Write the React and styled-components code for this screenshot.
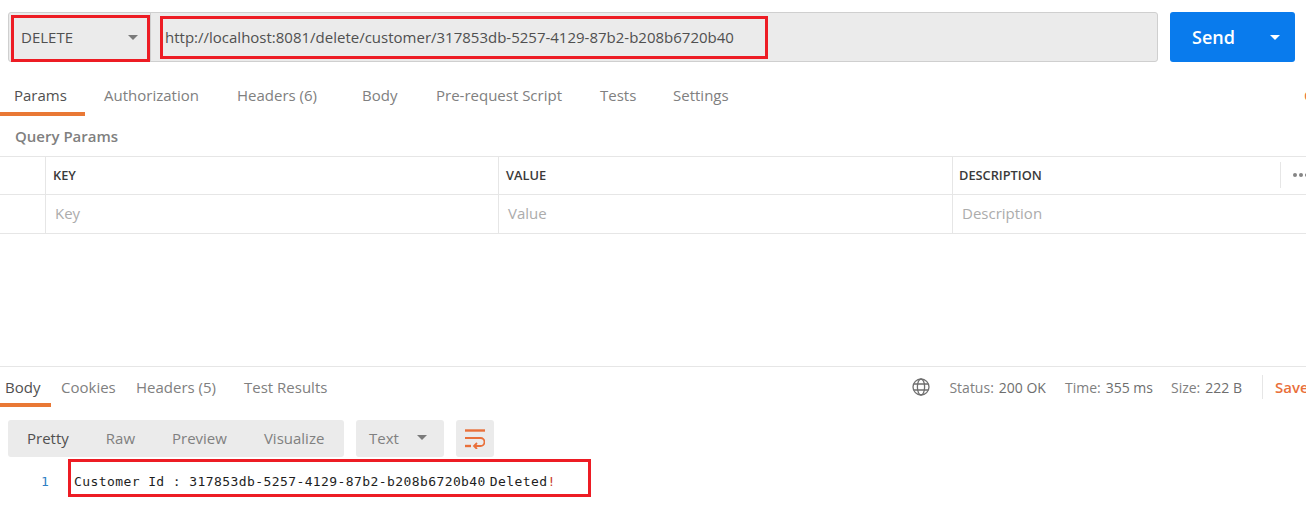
import React from 'react';
import styled, { createGlobalStyle } from 'styled-components';

const GlobalStyle = createGlobalStyle`
  html, body {
    margin: 0;
    padding: 0;
    background: #fff;
    overflow: hidden;
  }
  body {
    font-family: "Open Sans", "Liberation Sans", sans-serif;
  }
`;

const Page = styled.div`
  width: 1306px;
  height: 512px;
  overflow: hidden;
  display: flex;
  flex-direction: column;
`;

const RequestBar = styled.div`
  display: flex;
  height: 50px;
  margin-top: 12px;
  padding: 0 11px 0 8px;
  gap: 12px;
`;

const UrlGroup = styled.div`
  flex: 1;
  display: flex;
  background: #ebebeb;
  border: 1px solid #cfcfcf;
  border-radius: 3px;
`;

const MethodSelect = styled.div`
  position: relative;
  width: 142px;
  display: flex;
  align-items: center;
  justify-content: space-between;
  box-sizing: border-box;
  padding: 0 12px 0 12px;
  border-right: 1px solid #cfcfcf;
  font-size: 15px;
  color: #505050;
`;

const UrlInput = styled.div`
  position: relative;
  flex: 1;
  display: flex;
  align-items: center;
  padding-left: 14px;
  font-size: 15px;
  color: #505050;
`;

const Caret = styled.span`
  width: 0;
  height: 0;
  border-left: ${({ $size }) => $size || 5}px solid transparent;
  border-right: ${({ $size }) => $size || 5}px solid transparent;
  border-top: ${({ $size }) => $size || 5}px solid ${({ $color }) => $color || '#7a7a7a'};
`;

const SendButton = styled.div`
  width: 125px;
  display: flex;
  align-items: center;
  justify-content: space-between;
  box-sizing: border-box;
  padding: 0 15px 0 22px;
  background: #097bed;
  border-radius: 3px;
  color: #fff;
  font-size: 18px;
  font-weight: 600;
`;

const Tabs = styled.div`
  display: flex;
  height: 33px;
  margin-top: 21px;
`;

const Tab = styled.div`
  box-sizing: border-box;
  width: ${({ $width }) => $width}px;
  padding-left: ${({ $left }) => $left}px;
  padding-top: ${({ $top }) => $top}px;
  font-size: 15px;
  line-height: 20px;
  white-space: nowrap;
  color: ${({ $active }) => ($active ? '#505050' : '#808080')};
  border-bottom: 4px solid ${({ $active }) => ($active ? '#e97835' : 'transparent')};
`;

// runs off the right edge of the window, only its first pixels show
const CookiesLink = styled.div`
  margin-left: auto;
  width: 2px;
  overflow: hidden;
  padding-top: 2px;
  font-size: 15px;
  line-height: 20px;
  color: #e9703a;
`;

const QueryTitle = styled.div`
  margin: 12px 0 0 15px;
  height: 28px;
  line-height: 16px;
  font-size: 15px;
  font-weight: 600;
  color: #808080;
`;

const Table = styled.div`
  border-top: 1px solid #e6e6e6;
`;

const Row = styled.div`
  display: grid;
  grid-template-columns: 46px 453px 454px 1fr;
  height: ${({ $height }) => $height}px;
  border-bottom: 1px solid #e6e6e6;
`;

const Cell = styled.div`
  display: flex;
  align-items: center;
  justify-content: ${({ $spread }) => ($spread ? 'space-between' : 'flex-start')};
  box-sizing: border-box;
  padding-left: ${({ $left }) => $left || 0}px;
  padding-bottom: 2px;
  border-right: ${({ $last }) => ($last ? 'none' : '1px solid #e6e6e6')};
  overflow: hidden;
`;

const HeadLabel = styled.span`
  font-size: 12.8px;
  font-weight: 600;
  color: #3a3a3a;
`;

const Placeholder = styled.span`
  font-size: 15px;
  color: #acacac;
`;

const MoreButton = styled.div`
  width: 26px;
  height: 26px;
  box-sizing: border-box;
  border-left: 1px solid #e6e6e6;
  padding-left: 12px;
  display: flex;
  align-items: center;
  gap: 2px;
`;

const Dot = styled.span`
  flex: none;
  width: 4px;
  height: 4px;
  border-radius: 50%;
  background: #858585;
`;

const ResponsePane = styled.div`
  margin-top: 132px;
  border-top: 1px solid #e6e6e6;
`;

const ResponseHead = styled.div`
  display: flex;
  justify-content: space-between;
  height: 40px;
`;

const ResponseTabs = styled.div`
  display: flex;
`;

const StatusBar = styled.div`
  display: flex;
  align-items: center;
  height: 40px;
  font-size: 14px;
  color: #808080;
`;

const StatusItem = styled.span`
  margin-left: ${({ $left }) => $left}px;
  white-space: nowrap;

  b {
    font-weight: 400;
    color: #6e6e6e;
    margin-left: 5px;
  }
`;

const SaveLink = styled.div`
  margin-left: 20px;
  padding-left: 12px;
  height: 24px;
  line-height: 24px;
  border-left: 1px solid #e6e6e6;
  font-size: 15px;
  font-weight: 600;
  color: #e9703a;
  width: 31px;
  overflow: hidden;
`;

const Toolbar = styled.div`
  display: flex;
  gap: 12px;
  margin: 13px 0 0 8px;
  height: 37px;
`;

const ModeGroup = styled.div`
  display: flex;
  align-items: center;
  box-sizing: border-box;
  padding-bottom: 2px;
  width: 336px;
  background: #ebebeb;
  border-radius: 3px;
`;

const Mode = styled.span`
  font-size: 15px;
  margin-left: ${({ $left }) => $left}px;
  color: ${({ $active }) => ($active ? '#505050' : '#808080')};
`;

const FormatSelect = styled.div`
  width: 88px;
  display: flex;
  align-items: center;
  justify-content: space-between;
  box-sizing: border-box;
  padding: 0 17px 2px 13px;
  background: #ebebeb;
  border-radius: 3px;
  font-size: 15px;
  color: #808080;
`;

const WrapButton = styled.div`
  width: 38px;
  display: flex;
  align-items: center;
  justify-content: center;
  background: #ebebeb;
  border-radius: 3px;
`;

const CodeLine = styled.div`
  display: flex;
  align-items: center;
  height: 24px;
  margin-top: 12px;
`;

const LineNumber = styled.span`
  width: 74px;
  box-sizing: border-box;
  padding-left: 41px;
  font-family: "DejaVu Sans Mono", "Liberation Mono", monospace;
  font-size: 13px;
  color: #2f7fc4;
`;

const CodeText = styled.span`
  font-family: "DejaVu Sans Mono", "Liberation Mono", monospace;
  font-size: 13px;
  letter-spacing: 0.41px;
  color: #1e1e1e;
  white-space: pre;
`;

const DeletedText = styled(CodeText)`
  margin-left: 4px;
`;

const Mark = styled.span`
  color: #c8402a;
`;

// red annotation boxes drawn over the screenshot
const Annotation = styled.div`
  position: absolute;
  box-sizing: border-box;
  border: 3px solid #ed1c24;
  left: ${({ $x }) => $x}px;
  top: ${({ $y }) => $y}px;
  width: ${({ $w }) => $w}px;
  height: ${({ $h }) => $h}px;
  pointer-events: none;
`;

const Root = styled.div`
  position: relative;
`;

const requestTabs = [
  { label: 'Params', width: 85, left: 14, active: true },
  { label: 'Authorization', width: 152, left: 19 },
  { label: 'Headers (6)', width: 125, left: 0 },
  { label: 'Body', width: 74, left: 0 },
  { label: 'Pre-request Script', width: 164, left: 0 },
  { label: 'Tests', width: 73, left: 0 },
  { label: 'Settings', width: 100, left: 0 },
];

const responseTabs = [
  { label: 'Body', width: 51, left: 5, active: true },
  { label: 'Cookies', width: 85, left: 10 },
  { label: 'Headers (5)', width: 108, left: 0 },
  { label: 'Test Results', width: 120, left: 0 },
];

const GlobeIcon = () => (
  <svg width="18" height="18" viewBox="0 0 18 18" fill="none" stroke="#6f6f6f" strokeWidth="1.3">
    <circle cx="9" cy="9" r="8" />
    <ellipse cx="9" cy="9" rx="3.6" ry="8" />
    <path d="M1.8 6h14.4M1.8 12h14.4" />
  </svg>
);

const WrapIcon = () => (
  <svg width="20" height="20" viewBox="0 0 20 20" fill="none" stroke="#e9703a" strokeWidth="1.8">
    <path d="M0 1.5h20" strokeWidth="2.4" />
    <path d="M0 9h15.5a4 4 0 0 1 0 8H9" />
    <path d="M12 14 9 17l3 3" />
    <path d="M0 17h6" strokeWidth="2.4" />
  </svg>
);

const App = () => (
  <Root>
    <GlobalStyle />
    <Page>
      <RequestBar>
        <UrlGroup>
          <MethodSelect>
            DELETE
            <Caret />
          </MethodSelect>
          <UrlInput>http://localhost:8081/delete/customer/317853db-5257-4129-87b2-b208b6720b40</UrlInput>
        </UrlGroup>
        <SendButton>
          Send
          <Caret $size={5} $color="#fff" />
        </SendButton>
      </RequestBar>

      <Tabs>
        {requestTabs.map((tab) => (
          <Tab key={tab.label} $width={tab.width} $left={tab.left} $top={2} $active={tab.active}>
            {tab.label}
          </Tab>
        ))}
        <CookiesLink>Cookies</CookiesLink>
      </Tabs>

      <QueryTitle>Query Params</QueryTitle>

      <Table>
        <Row $height={37}>
          <Cell />
          <Cell $left={7}><HeadLabel>KEY</HeadLabel></Cell>
          <Cell $left={7}><HeadLabel>VALUE</HeadLabel></Cell>
          <Cell $left={6} $last $spread>
            <HeadLabel>DESCRIPTION</HeadLabel>
            <MoreButton><Dot /><Dot /><Dot /></MoreButton>
          </Cell>
        </Row>
        <Row $height={38}>
          <Cell />
          <Cell $left={9}><Placeholder>Key</Placeholder></Cell>
          <Cell $left={9}><Placeholder>Value</Placeholder></Cell>
          <Cell $left={9} $last><Placeholder>Description</Placeholder></Cell>
        </Row>
      </Table>

      <ResponsePane>
        <ResponseHead>
          <ResponseTabs>
            {responseTabs.map((tab) => (
              <Tab key={tab.label} $width={tab.width} $left={tab.left} $top={10} $active={tab.active}>
                {tab.label}
              </Tab>
            ))}
          </ResponseTabs>
          <StatusBar>
            <GlobeIcon />
            <StatusItem $left={19}>Status:<b>200 OK</b></StatusItem>
            <StatusItem $left={19}>Time:<b>355 ms</b></StatusItem>
            <StatusItem $left={18}>Size:<b>222 B</b></StatusItem>
            <SaveLink>Save</SaveLink>
          </StatusBar>
        </ResponseHead>

        <Toolbar>
          <ModeGroup>
            <Mode $left={19} $active>Pretty</Mode>
            <Mode $left={37}>Raw</Mode>
            <Mode $left={37}>Preview</Mode>
            <Mode $left={37}>Visualize</Mode>
          </ModeGroup>
          <FormatSelect>
            Text
            <Caret />
          </FormatSelect>
          <WrapButton><WrapIcon /></WrapButton>
        </Toolbar>

        <CodeLine>
          <LineNumber>1</LineNumber>
          <CodeText>Customer Id : 317853db-5257-4129-87b2-b208b6720b40</CodeText>
          <DeletedText>Deleted<Mark>!</Mark></DeletedText>
        </CodeLine>
      </ResponsePane>
    </Page>

    <Annotation $x={11} $y={15} $w={139} $h={47} />
    <Annotation $x={160} $y={16} $w={608} $h={43} />
    <Annotation $x={68} $y={459} $w={523} $h={38} />
  </Root>
);

export default App;
